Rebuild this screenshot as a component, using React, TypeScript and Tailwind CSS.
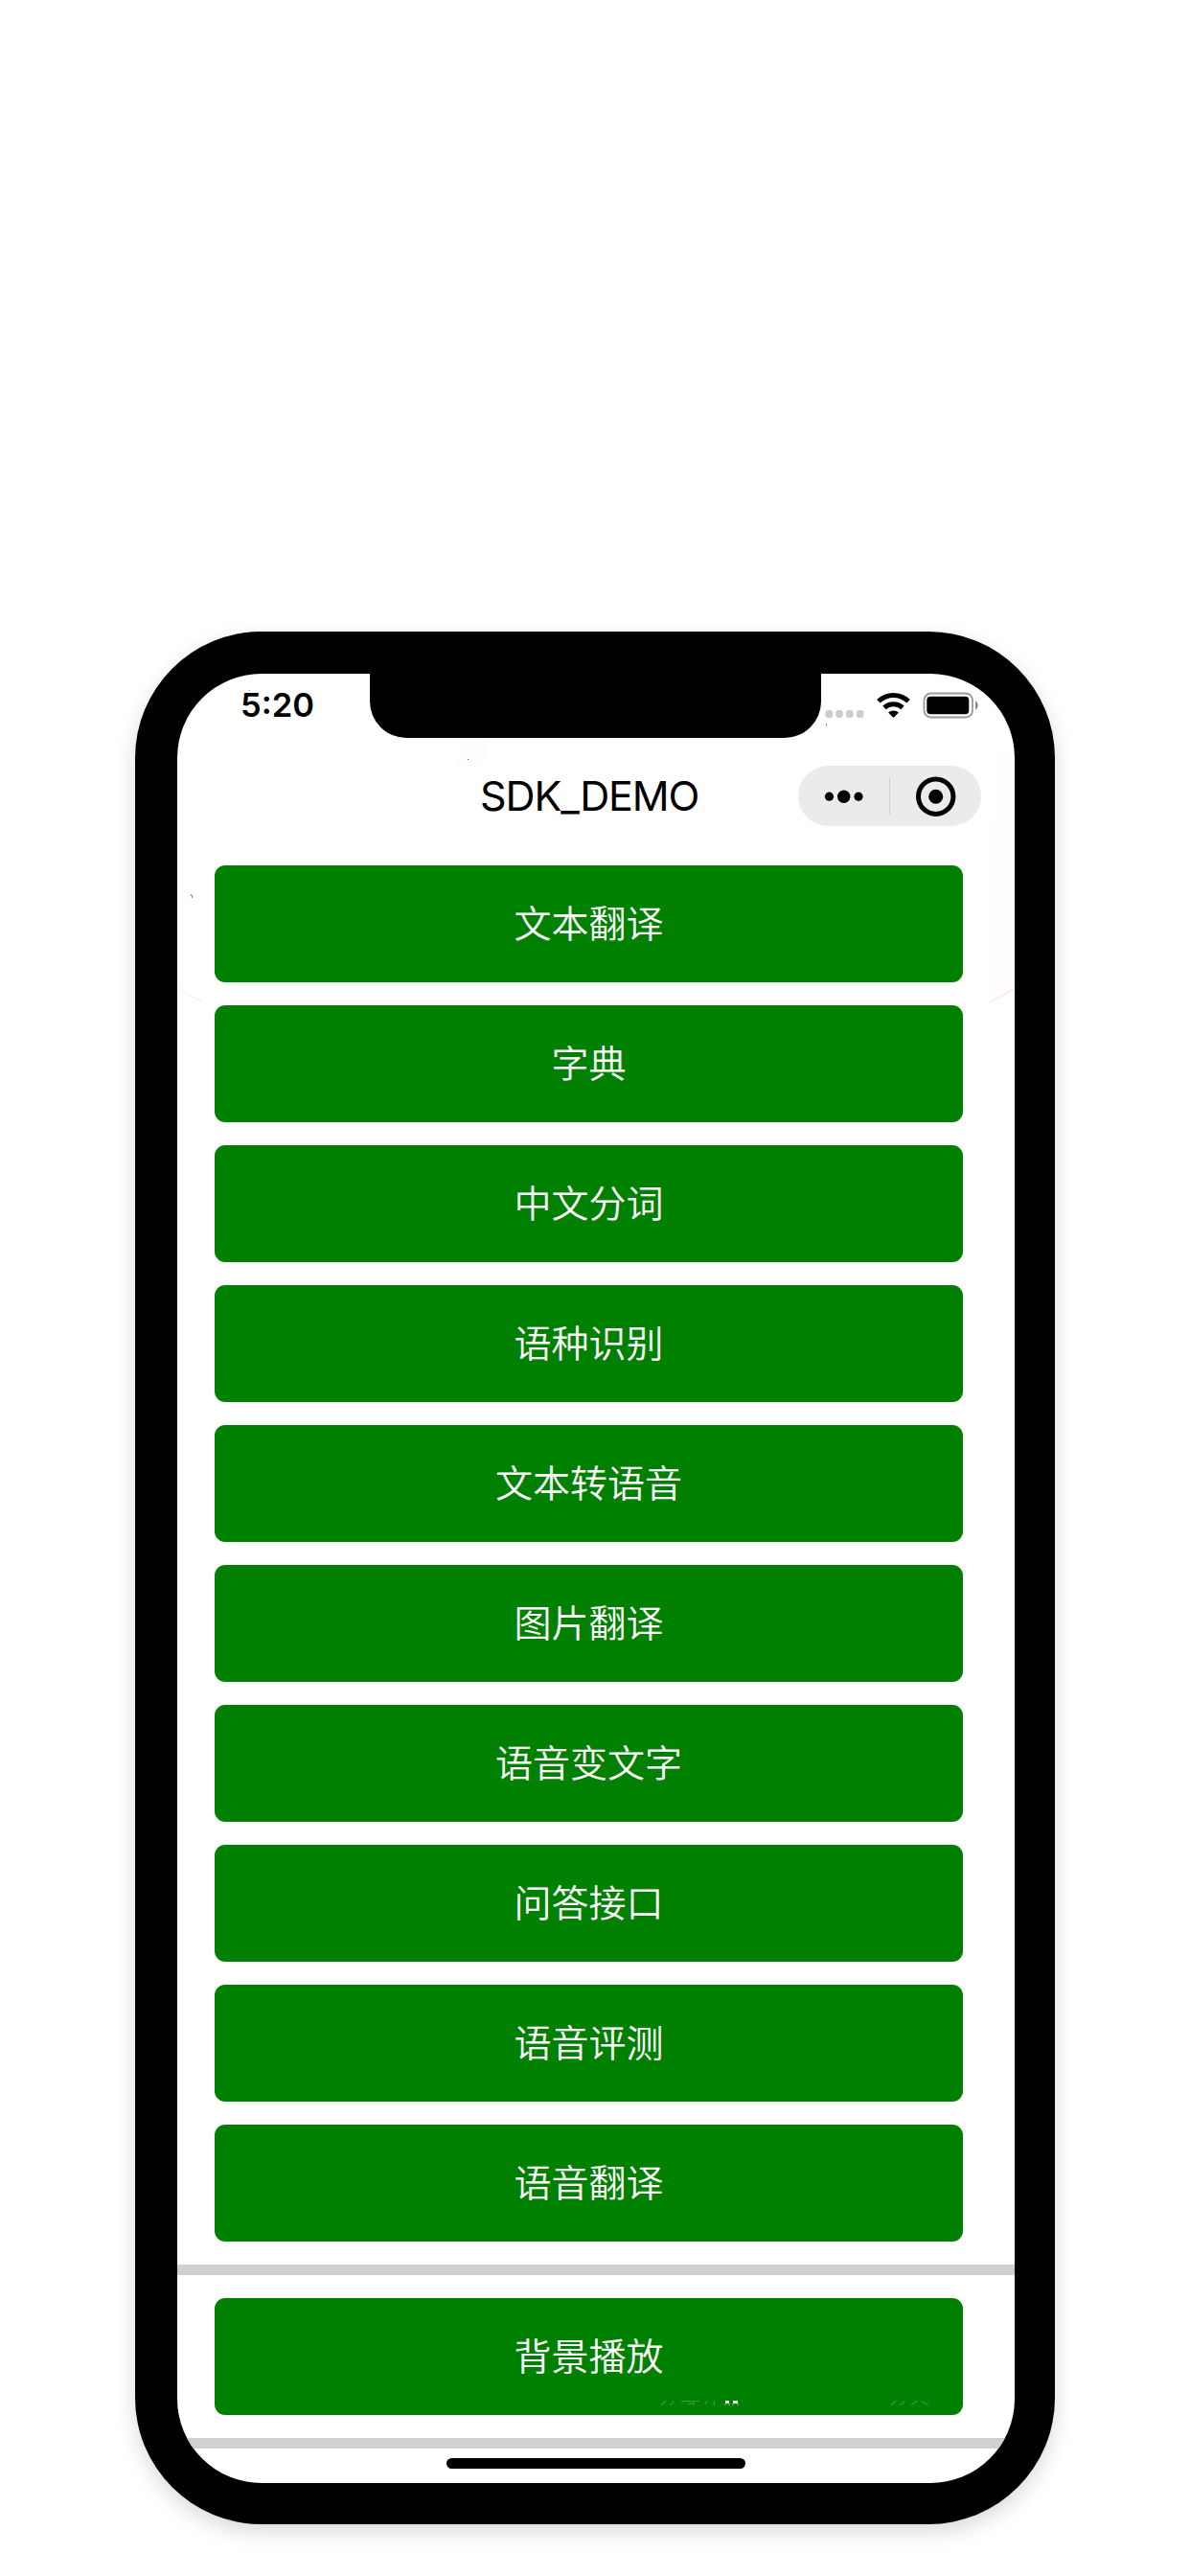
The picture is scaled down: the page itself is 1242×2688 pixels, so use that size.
import React from "react";

const actions = [
  "文本翻译",
  "字典",
  "中文分词",
  "语种识别",
  "文本转语音",
  "图片翻译",
  "语音变文字",
  "问答接口",
  "语音评测",
  "语音翻译",
];

function ActionButton({ label, children }: { label: string; children?: React.ReactNode }) {
  return (
    <button className="relative flex h-[122px] w-[781px] shrink-0 items-center justify-center rounded-[11px] bg-[#008000] pb-[2px] text-[39px] leading-none font-[350] text-white">
      {label}
      {children}
    </button>
  );
}

function Divider() {
  return <div className="h-[11px] w-full shrink-0 bg-[#d0d0d0]" />;
}

function StatusIcons() {
  return (
    <svg className="absolute top-[14px] left-[675px] h-[42px] w-[170px]" viewBox="860 717 170 42">
      <g fill="#cccccc">
        <rect x="861.5" y="741" width="7.6" height="8" rx="3" />
        <rect x="872.2" y="741" width="7.6" height="8" rx="3" />
        <rect x="883" y="741" width="7.6" height="8" rx="3" />
        <rect x="893.8" y="741" width="7.6" height="8" rx="3" />
      </g>
      <g fill="none" stroke="#000" strokeWidth="5">
        <path d="M916.900 731.700a22.500 22.500 0 0 1 31.200 0" />
        <path d="M923 738.400a14 14 0 0 1 19 0" />
      </g>
      <path d="M927 743.600a8.500 8.500 0 0 1 11 0l-5.500 5.400z" fill="#000" />
      <rect x="964.5" y="723.5" width="50.5" height="25" rx="7" fill="none" stroke="#999" strokeWidth="1.8" />
      <rect x="967.3" y="726.8" width="44" height="18.4" rx="4" fill="#000" />
      <path d="M1018 731.500c3.600 1.500 3.600 7.500 0 9z" fill="#888" />
      <path d="M862.500 755v3" stroke="#ff6b6b" strokeWidth="1" />
    </svg>
  );
}

function Capsule() {
  return (
    <div className="absolute top-[96px] left-[648px] h-[63px] w-[191px] rounded-full bg-[#ebebeb]">
      <svg className="h-full w-full" viewBox="833 799 191 63">
        <circle cx="865.500" cy="831.2" r="4.600" />
        <circle cx="880.700" cy="831.2" r="6.700" />
        <circle cx="896" cy="831.2" r="4.600" />
        <path d="M928.500 811v39" stroke="#d0d0d0" strokeWidth="1" />
        <circle cx="976.700" cy="831.2" r="18.200" fill="none" stroke="#000" strokeWidth="5" />
        <circle cx="976.700" cy="831.2" r="7.500" />
      </svg>
    </div>
  );
}

/* Faint coloured specks and arcs around the edge of the screen. */
function ScreenSpecks() {
  return (
    <svg className="pointer-events-none absolute top-0 left-0 h-[400px] w-[874px]" viewBox="185 703 874 400">
      <rect x="260" y="720" width="1" height="1" fill="#ff6a3d" />
      <rect x="488" y="792" width="1" height="1" fill="#ff2020" />
      <path d="M485 772h24l-4 30h-30z" fill="#ff0000" opacity="0.012" />
      <path d="M199 933h1v1h1v3h-1v-2h-1z" fill="#ff6a3d" />
      <path d="M185 1031q12 8 27 14.500" fill="none" stroke="#ffece6" />
      <path d="M1059 1031q-12 8 -26 14.500" fill="none" stroke="#ffdcdc" />
      <path d="M1047 780l12 0v251q-12 8 -26 14v-180z" fill="#ff0000" opacity="0.006" />
    </svg>
  );
}

/* The clipped upper edge of a caption line showing over the last button. */
function CaptionEdge() {
  return (
    <svg className="pointer-events-none absolute top-[107px] left-[456px] h-[6px] w-[300px]" viewBox="680 2505 300 6" fill="none">
      <g stroke="#3f963f" strokeWidth="1.2">
        <path d="M695 2505l-5 4.500M702 2505q2 4 -3 3.800" />
        <path d="M711 2505.600h19M717 2509l7 -1.500v3M738 2505l-2 4M745.500 2505v5" />
        <path d="M935 2505l-5 4.500M943.500 2505q0 4.500 -5 3.600M958 2505l-7 4.500M961 2505q3 3 8 4.500" />
      </g>
      <path d="M757 2505h4v3h-4zM765 2505h5v3h-5z" fill="#fff" />
      <path d="M757 2508v2M761 2508v2M765 2508v2M770 2508v2" stroke="#8fbf8f" />
    </svg>
  );
}

export default function App() {
  return (
    <div className="flex h-[2688px] w-[1242px] flex-col bg-white pt-[659px] pl-[141px] font-['Inter','Noto_Sans_CJK_SC',sans-serif]">
      <div className="h-[1975px] w-[960px] rounded-[132px] bg-black pt-[44px] pl-[44px] shadow-[0_8px_22px_rgba(0,0,0,0.15)]">
        <div className="relative flex h-[1888px] w-[874px] flex-col overflow-hidden rounded-[88px] bg-white">
          <header className="h-[200px] w-full shrink-0">
            <ScreenSpecks />
            <div className="absolute top-0 left-[201px] h-[67px] w-[471px] rounded-b-[38px] bg-black" />
            <span className="absolute top-[12px] left-[66px] text-[34.500px] leading-[42px] font-[560]">5:20</span>
            <StatusIcons />
            <h1 className="pt-[102px] pl-[316px] text-[43px] leading-[50px] font-[370] tracking-[-1.1px]">SDK_DEMO</h1>
            <Capsule />
          </header>
          <main className="flex flex-col items-start gap-6">
            <div className="flex flex-col gap-6 pl-[39px]">
              {actions.map((label) => (
                <ActionButton key={label} label={label} />
              ))}
            </div>
            <Divider />
            <div className="pl-[39px]">
              <ActionButton label="背景播放">
                <CaptionEdge />
              </ActionButton>
            </div>
            <Divider />
          </main>
          <div className="absolute bottom-[15px] left-[281px] h-[11px] w-[312px] rounded-full bg-black" />
        </div>
      </div>
    </div>
  );
}
